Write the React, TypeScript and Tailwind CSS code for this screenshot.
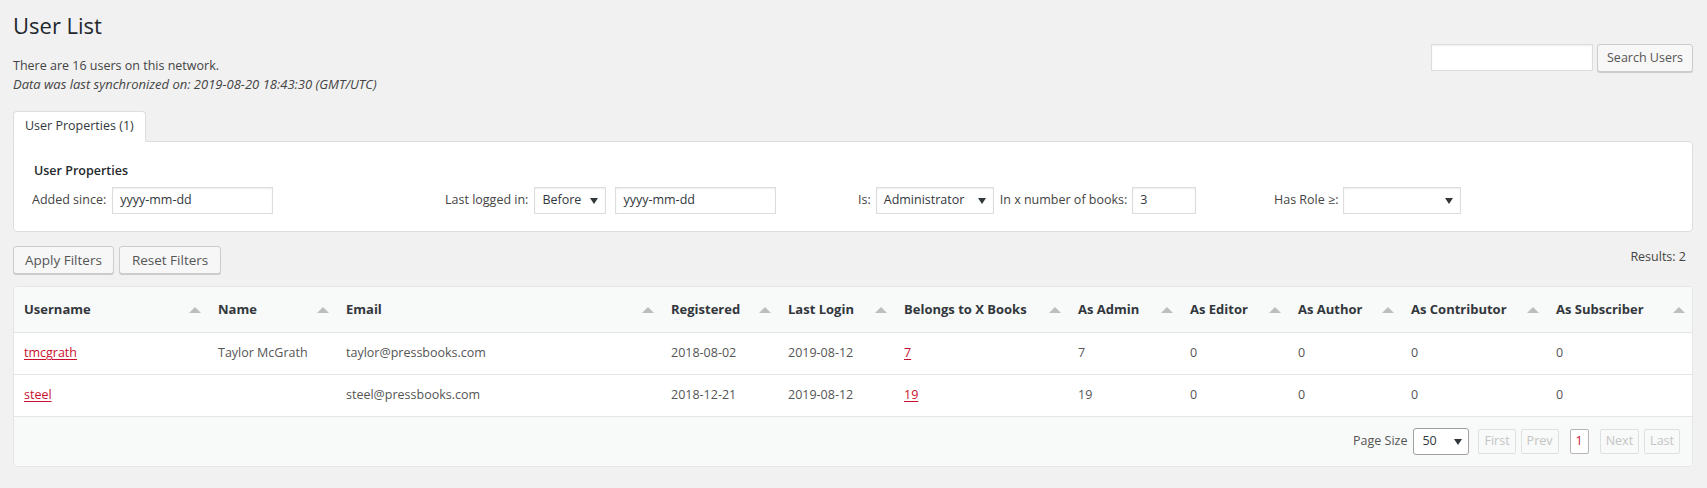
import React from "react";

const F = { fontFamily: "'Open Sans', 'Noto Sans', sans-serif" };

function Caret({ className = "" }: { className?: string }) {
  return (
    <svg width="8" height="6" viewBox="0 0 8 6" className={className}>
      <path d="M0 0h8L4 6z" fill="#32373c" />
    </svg>
  );
}

function SortArrow() {
  return (
    <svg width="12" height="6" viewBox="0 0 12 6" className="shrink-0">
      <path d="M0 6L6 0l6 6z" fill="#bdbdbd" />
    </svg>
  );
}

function Select({ w, value }: { w: string; value: string }) {
  return (
    <div className={`${w} h-[27px] flex items-center justify-between bg-white border border-[#dddddd] shadow-[inset_0_1px_2px_rgba(0,0,0,0.07)] pl-[7px] pr-[7px] text-[12.5px] text-[#32373c]`}>
      <span>{value}</span>
      <Caret />
    </div>
  );
}

function TextInput({ w, value }: { w: string; value: string }) {
  return (
    <div className={`${w} h-[27px] flex items-center bg-white border border-[#dddddd] shadow-[inset_0_1px_2px_rgba(0,0,0,0.07)] px-[7px] text-[12.5px] text-[#32373c]`}>
      {value}
    </div>
  );
}

const cols = [
  "Username",
  "Name",
  "Email",
  "Registered",
  "Last Login",
  "Belongs to X Books",
  "As Admin",
  "As Editor",
  "As Author",
  "As Contributor",
  "As Subscriber",
];

const rows = [
  ["tmcgrath", "Taylor McGrath", "taylor@pressbooks.com", "2018-08-02", "2019-08-12", "7", "7", "0", "0", "0", "0"],
  ["steel", "", "steel@pressbooks.com", "2018-12-21", "2019-08-12", "19", "19", "0", "0", "0", "0"],
];

const grid =
  "grid grid-cols-[194px_128px_325px_117px_116px_174px_112px_108px_113px_145px_1fr]";

function PageBtn({ label, active = false }: { label: string; active?: boolean }) {
  return (
    <div
      className={`h-[25px] flex items-center px-[5px] rounded-[2px] border text-[12.5px] ${
        active ? "border-[#b5b5b5] text-[#c8102e] bg-white" : "border-[#e0e0e0] text-[#c4c4c4]"
      }`}
    >
      {label}
    </div>
  );
}

const btnBase =
  "h-[28px] flex items-center rounded-[3px] bg-[#f7f7f7] border border-[#cccccc] shadow-[0_1px_0_#cccccc] text-[#555]";

export default function App() {
  return (
    <div className="min-h-[488px] bg-[#f1f1f1] pl-[13px] pr-[14px] pt-[10px] text-[#444]" style={F}>
      <div className="flex justify-between">
        <div>
          <h1 className="text-[22px] leading-[30px] text-[#23282d] font-normal">User List</h1>
          <p className="mt-[16px] text-[12.5px] leading-[19px] text-[#444]">There are 16 users on this network.</p>
          <p className="text-[13px] leading-[19px] italic text-[#444]">
            Data was last synchronized on: 2019-08-20 18:43:30 (GMT/UTC)
          </p>
        </div>
        <div className="mt-[34px] flex gap-[4px] items-start">
          <div className="w-[162px] h-[27px] bg-white border border-[#dddddd] shadow-[inset_0_1px_2px_rgba(0,0,0,0.07)]" />
          <div className={`${btnBase} px-[9px] text-[12.5px]`}>Search Users</div>
        </div>
      </div>

      <div className="mt-[17px] flex">
        <div className="relative z-10 -mb-px w-[133px] h-[31px] bg-white border border-[#dddddd] border-b-white rounded-t-[4px] pl-[11px] flex items-center text-[12.5px] text-[#32373c]">
          User Properties (1)
        </div>
      </div>
      <div className="bg-white border border-[#dddddd] rounded-[4px] rounded-tl-none pl-[18px] pt-[19px] pb-[17px]">
        <div className="text-[12.5px] leading-[20px] font-semibold text-[#23282d] pl-[2px]">User Properties</div>
        <div className="mt-[6px] grid grid-cols-[413px_413px_416px_1fr] items-center text-[12.5px] text-[#444]">
          <div className="flex items-center gap-[6px]">
            <span>Added since:</span>
            <TextInput w="w-[161px]" value="yyyy‑mm‑dd" />
          </div>
          <div className="flex items-center">
            <span>Last logged in:</span>
            <div className="ml-[6px]">
              <Select w="w-[72px]" value="Before" />
            </div>
            <div className="ml-[9px]">
              <TextInput w="w-[161px]" value="yyyy‑mm‑dd" />
            </div>
          </div>
          <div className="flex items-center">
            <span>Is:</span>
            <div className="ml-[5px]">
              <Select w="w-[118px]" value="Administrator" />
            </div>
            <span className="ml-[6px]">In x number of books:</span>
            <div className="ml-[5px]">
              <TextInput w="w-[64px]" value="3" />
            </div>
          </div>
          <div className="flex items-center">
            <span>Has Role ≥:</span>
            <div className="ml-[5px]">
              <Select w="w-[118px]" value="" />
            </div>
          </div>
        </div>
      </div>

      <div className="mt-[14px] flex items-center justify-between pr-[7px]">
        <div className="flex gap-[5px]">
          <div className={`${btnBase} px-[11px] text-[13.5px]`}>Apply Filters</div>
          <div className={`${btnBase} px-[12px] text-[13.5px]`}>Reset Filters</div>
        </div>
        <div className="text-[12.5px] text-[#444] -mt-[6px]">Results: 2</div>
      </div>

      <div className="mt-[12px] bg-white border border-[#e5e5e5] rounded-[4px] overflow-hidden text-[12.5px]">
        <div className={`${grid} h-[46px] bg-[#f8f9f9] border-b border-[#e5e5e5]`}>
          {cols.map((c) => (
            <div key={c} className="flex items-center justify-between pl-[10px] pr-[7px] font-bold text-[13px] text-[#32373c]">
              <span>{c}</span>
              <SortArrow />
            </div>
          ))}
        </div>
        {rows.map((r, ri) => (
          <div key={ri} className={`${grid} h-[42px] border-b border-[#e5e5e5] bg-white`}>
            {r.map((v, i) => (
              <div key={i} className="flex items-center pl-[10px] text-[#555]">
                {i === 0 || i === 5 ? (
                  <a className="text-[#c8102e] underline underline-offset-2">{v}</a>
                ) : (
                  <span>{v}</span>
                )}
              </div>
            ))}
          </div>
        ))}
        <div className="h-[49px] bg-[#f8f9f9] flex items-center justify-end pr-[12px]">
          <span className="text-[#555]">Page Size</span>
          <div className="ml-[6px] w-[56px] h-[27px] flex items-center justify-between border border-[#a0a0a0] rounded-[3px] bg-white pl-[8px] pr-[6px] text-[#32373c]">
            <span>50</span>
            <Caret />
          </div>
          <div className="ml-[9px] flex gap-[5px]">
            <PageBtn label="First" />
            <PageBtn label="Prev" />
          </div>
          <div className="ml-[11px]">
            <PageBtn label="1" active />
          </div>
          <div className="ml-[11px] flex gap-[5px]">
            <PageBtn label="Next" />
            <PageBtn label="Last" />
          </div>
        </div>
      </div>
    </div>
  );
}
